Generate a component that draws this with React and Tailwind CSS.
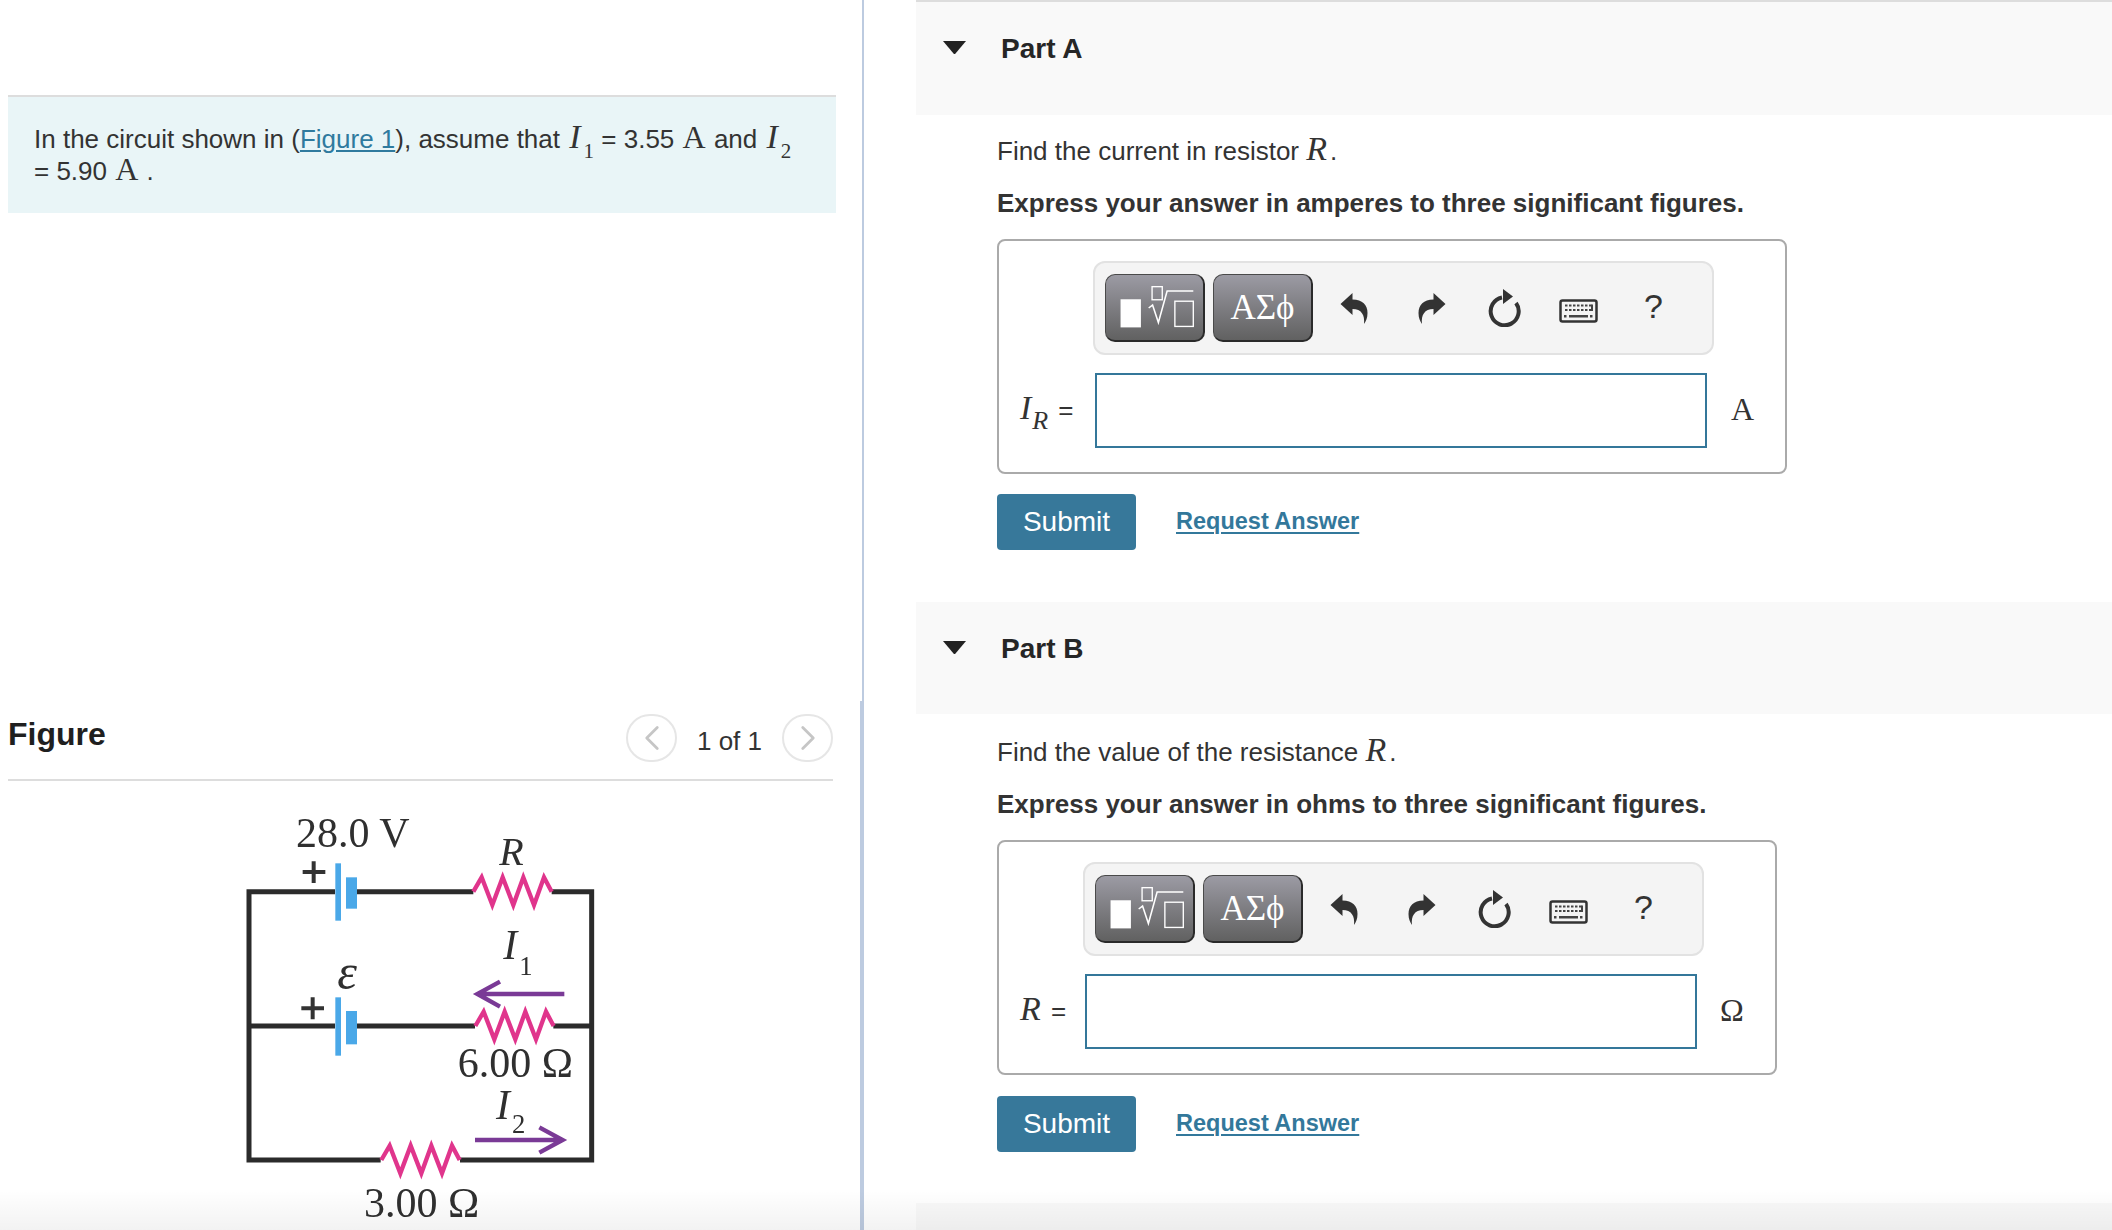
import React from "react";
import { ChevronLeft, ChevronRight } from "lucide-react";

const serif = "font-['Liberation_Serif',serif]";

function Mi({ children, sub, wide }) {
  return (
    <span className={`${serif} leading-[0]`}>
      <i className={`text-[34px] leading-[0] ${wide ? "pr-[3px]" : "pl-[2px] pr-[3px]"}`}>{children}</i>
      {sub ? <sub className="text-[21px] align-[-5px] leading-[0]">{sub}</sub> : null}
    </span>
  );
}

function Unit() {
  return <span className={`${serif} text-[32px] leading-[0] px-[1px]`}>A</span>;
}

function Undo({ flip }) {
  return (
    <svg width="28" height="31" viewBox="0 0 27 31" className={flip ? "-scale-x-100" : ""}>
      <path d="M0 11 L12 0 V6.5 C22 6.5 27 12 27 20 C27 25 25.5 28 23.5 31 C24.5 22 21 16 12 16 V22 Z" fill="#333" />
    </svg>
  );
}

function Reset() {
  return (
    <svg width="34" height="38" viewBox="0 0 34 38">
      <path d="M14 8.5 A14 14 0 1 0 28 14" fill="none" stroke="#333" strokeWidth="4" />
      <path d="M15 0 L25 7.5 L15 15 Z" fill="#333" />
    </svg>
  );
}

function Keyboard() {
  const top = [6, 10, 14, 18, 22, 26, 30];
  return (
    <svg width="39" height="24" viewBox="0 0 39 24">
      <rect x="1.5" y="1.5" width="36" height="21" rx="2" fill="none" stroke="#333" strokeWidth="2.5" />
      {top.map((x) => (
        <rect key={x} x={x} y="5.5" width="2.5" height="2" fill="#444" />
      ))}
      {top.map((x) => (
        <rect key={x} x={x} y="10" width="2.5" height="2" fill="#444" />
      ))}
      <rect x="32" y="5.5" width="2" height="6.5" fill="#444" />
      <rect x="5" y="16" width="2.5" height="2.5" fill="#444" />
      <rect x="10" y="16" width="19" height="2.5" fill="#444" />
      <rect x="31" y="16" width="2.5" height="2.5" fill="#444" />
    </svg>
  );
}

function MathBtn({ children }) {
  return (
    <div className="w-[100px] h-[68px] rounded-[10px] border border-[#4a4a4a] border-r-2 border-b-2 border-r-[#2a2a2a] border-b-[#2a2a2a] bg-gradient-to-b from-[#9c9ba4] to-[#616161] flex items-center justify-center">
      {children}
    </div>
  );
}

function Toolbar({ className }) {
  return (
    <div className={`w-[621px] h-[94px] border-2 border-[#e2e2e2] bg-[#f4f4f4] rounded-[12px] pl-[10px] flex items-center ${className}`}>
      <MathBtn>
        <svg width="100" height="68" viewBox="0 0 100 68" fill="none">
          <rect x="15" y="25" width="21" height="29" fill="#fff" />
          <rect x="47.5" y="12" width="10.5" height="13.5" stroke="#fff" strokeWidth="1.4" />
          <path d="M44 34 L48 31 L54 49 L63 16.5 H90" stroke="#fff" strokeWidth="1.6" />
          <rect x="71" y="27" width="19" height="26" stroke="#fff" strokeWidth="1.4" />
        </svg>
      </MathBtn>
      <div className="ml-[8px]">
        <MathBtn>
          <span className={`${serif} text-white text-[35px] leading-none`}>ΑΣϕ</span>
        </MathBtn>
      </div>
      <div className="w-[2px]" />
      <div className="w-[78px] flex justify-center"><Undo /></div>
      <div className="w-[78px] flex justify-center"><Undo flip /></div>
      <div className="w-[67px] flex justify-center"><Reset /></div>
      <div className="w-[80px] flex justify-center pt-[6px]"><Keyboard /></div>
      <div className="w-[71px] flex justify-center text-[34px] text-[#333] pb-[4px]">?</div>
    </div>
  );
}

function Part({ name, first, find, express, wide, label, unit }) {
  return (
    <section className={first ? "h-[602px]" : "h-[601px]"}>
      <div className={`bg-[#f9f9f9] flex items-start pl-[28px] ${first ? "h-[115px] border-t-2 border-[#dddddd] pt-[31px]" : "h-[112px] pt-[31px]"}`}>
        <svg width="23" height="13" viewBox="0 0 23 13" className="mt-[8px] -ml-[1px]">
          <path d="M0 0 H23 L12.5 12.5 Q11.5 13.5 10.5 12.5 Z" fill="#222" />
        </svg>
        <h2 className="ml-[35px] text-[28px] leading-[32px] font-bold text-[#262626]">{name}</h2>
      </div>
      <div className="pl-[81px]">
        <p className={`${first ? "mt-[20px]" : "mt-[22px]"} leading-[32px]`}>{find}</p>
        <p className="mt-[20px] leading-[32px] font-bold">{express}</p>
        <div className={`h-[235px] border-2 border-[#aaaaaa] rounded-[8px] pl-[21px] pt-[20px] ${wide ? "mt-[20px] w-[790px]" : "mt-[20px] w-[780px]"}`}>
          <Toolbar className={wide ? "ml-[73px]" : "ml-[63px]"} />
          <div className="mt-[18px] flex items-center">
            <div className={`${wide ? "w-[75px]" : "w-[65px]"} text-[26px] whitespace-nowrap`}>{label}</div>
            <div className="w-[612px] h-[75px] border-2 border-[#34779a] bg-white" />
            <div className={`${serif} text-[32px] -mt-[4px] ${wide ? "ml-[24px]" : "ml-[23px]"}`}>{unit}</div>
          </div>
        </div>
        <div className={`flex items-center ${wide ? "mt-[20px]" : "mt-[21px]"}`}>
          <button className="w-[139px] h-[56px] rounded-[4px] bg-[#37789a] text-white text-[28px]">Submit</button>
          <a className="ml-[40px] text-[23.5px] font-bold text-[#33789b] underline decoration-2 underline-offset-[3px]">Request Answer</a>
        </div>
      </div>
    </section>
  );
}

function Zig({ x, y }) {
  const d = [[0, 0], [25, -43], [57, 40], [88, -43], [120, 40], [150, -43], [182, 40], [212, -43], [235, 0]]
    .map(([a, b], i) => `${i ? "L" : "M"}${x + a} ${y + b}`)
    .join(" ");
  return <path d={d} fill="none" stroke="#e0358c" strokeWidth="13" strokeLinejoin="miter" />;
}

function Circuit() {
  const ink = "#2b2b2b";
  const w = 15;
  return (
    <svg width="400" height="440" viewBox="0 0 1200 1320" className={`${serif} blur-[0.5px]`}>
      <g stroke={ink} strokeWidth={w} fill="none">
        <path d="M345 305 H87 V1110 H482" />
        <path d="M410 305 H760" />
        <path d="M995 305 H1115 V1110 H720" />
        <path d="M87 708 H345" />
        <path d="M410 708 H765" />
        <path d="M1000 708 H1115" />
      </g>
      <Zig x={760} y={305} />
      <Zig x={766} y={708} />
      <Zig x={484} y={1110} />
      <g fill="#4aa8e8">
        <rect x="346" y="220" width="17" height="172" />
        <rect x="378" y="262" width="33" height="94" />
        <rect x="346" y="622" width="17" height="175" />
        <rect x="378" y="663" width="33" height="100" />
      </g>
      <g stroke="#333" strokeWidth="12" fill="none">
        <path d="M248 246 H316 M281 214 V279" />
        <path d="M244 655 H312 M278 622 V688" />
      </g>
      <g stroke="#7a3a96" strokeWidth="13" fill="none">
        <path d="M1033 612 H775 M840 575 L772 612 L840 650" />
        <path d="M765 1050 H1025 M958 1012 L1028 1050 L958 1088" />
      </g>
      <g fill="#2f2f2f">
        <text x="228" y="170" fontSize="126">28.0 V</text>
        <text x="838" y="225" fontSize="120" fontStyle="italic">R</text>
        <text x="850" y="506" fontSize="125" fontStyle="italic">I</text>
        <text x="898" y="555" fontSize="80">1</text>
        <text x="352" y="598" fontSize="150" fontStyle="italic">ε</text>
        <text x="713" y="860" fontSize="126">6.00 Ω</text>
        <text x="828" y="986" fontSize="125" fontStyle="italic">I</text>
        <text x="876" y="1028" fontSize="80">2</text>
        <text x="432" y="1280" fontSize="126">3.00 Ω</text>
      </g>
    </svg>
  );
}

function Pager({ children }) {
  return (
    <div className="w-[51px] h-[48px] rounded-full border-2 border-[#e6e6e6] flex items-center justify-center">
      {children}
    </div>
  );
}

export default function App() {
  return (
    <div className="relative w-[2112px] h-[1230px] overflow-hidden bg-white flex font-['Liberation_Sans',Arial,sans-serif] text-[26px] text-[#333]">
      <div className="w-[860px] shrink-0 pl-[8px] pt-[95px]">
        <div className="w-[828px] h-[118px] border-t-2 border-[#dddddd] bg-[#e9f5f7] pl-[26px] pt-[26px] leading-[32px] whitespace-nowrap">
          In the circuit shown in (<a className="text-[#2f7a9e] underline">Figure 1</a>), assume that <Mi sub="1">I</Mi> = 3.55 <Unit /> and <Mi sub="2">I</Mi>
          <br />= 5.90 <Unit /> .
        </div>
        <div className="mt-[501px] w-[825px] h-[67px] border-b-2 border-[#dddddd] flex items-start">
          <h2 className="text-[32px] leading-[40px] font-bold text-[#1f1f1f]">Figure</h2>
          <div className="ml-auto flex items-center">
            <Pager><ChevronLeft size={42} strokeWidth={1.6} className="text-[#c6c6c6]" /></Pager>
            <span className="w-[105px] text-center pt-[6px]">1 of 1</span>
            <Pager><ChevronRight size={42} strokeWidth={1.6} className="text-[#c6c6c6]" /></Pager>
          </div>
        </div>
        <div className="w-[823px] pt-[9px] flex justify-center">
          <Circuit />
        </div>
      </div>

      <div className="w-[4px] shrink-0 flex flex-col">
        <div className="h-[701px] w-[2px] ml-[2px] bg-[#bdcbe0]" />
        <div className="flex-1 bg-[#bdcbe0]" />
      </div>

      <div className="ml-[52px] flex-1">
        <Part
          first
          wide
          name="Part A"
          find={<>Find the current in resistor <Mi wide>R</Mi>.</>}
          express="Express your answer in amperes to three significant figures."
          label={<><i className={`${serif} text-[34px] leading-[0] pr-[1px]`}>I</i><sub className={`${serif} italic text-[26px] align-[-3px] leading-[0]`}>R</sub><span className="ml-[10px]">=</span></>}
          unit="A"
        />
        <Part
          name="Part B"
          find={<>Find the value of the resistance <Mi wide>R</Mi>.</>}
          express="Express your answer in ohms to three significant figures."
          label={<><Mi wide>R</Mi> =</>}
          unit="Ω"
        />
        <div className="h-[40px] bg-[#f9f9f9]" />
      </div>

      <div className="absolute left-0 right-0 bottom-0 h-[40px] pointer-events-none bg-gradient-to-b from-transparent to-black/5" />
    </div>
  );
}
